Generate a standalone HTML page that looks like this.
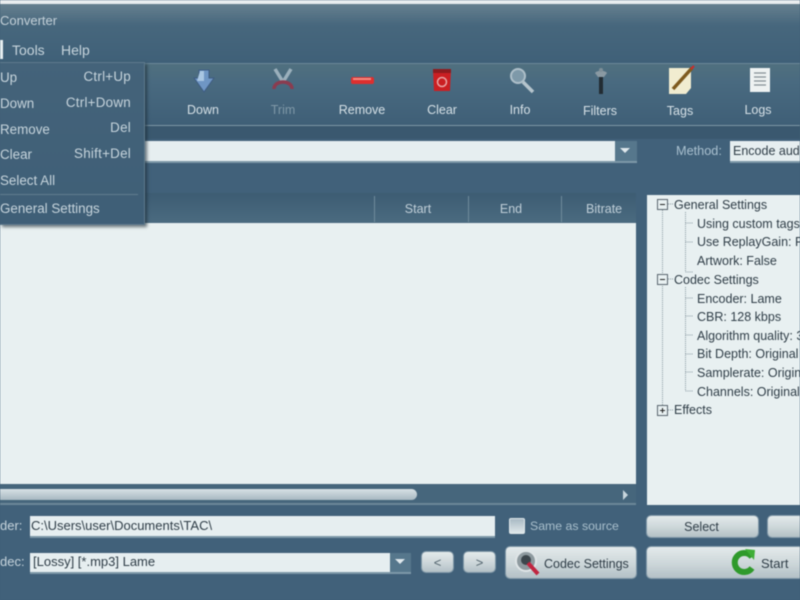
<!DOCTYPE html>
<html><head><meta charset="utf-8"><style>
html,body{margin:0;padding:0;width:800px;height:600px;overflow:hidden;background:#3f5f77}
#r{position:absolute;left:0;top:0;width:800px;height:600px;overflow:hidden;background:#41617a;font-family:"Liberation Sans",sans-serif;font-size:13px;color:#d5e0e6;filter:blur(.6px)}
#r div,#r svg{position:absolute}
.t{white-space:nowrap;line-height:16px;height:16px}
.c{text-align:center}
.d{color:#2f3d47}
.tb{color:#d5e0e6;font-size:12.5px}
.m{color:#c6d4dc;font-size:13.4px}
.k{letter-spacing:.25px}
.in{background:#e6eef0;border-bottom:2px solid #7d98a8}
.btn{background:linear-gradient(#e4eaeb,#ccd6d9 55%,#b3c0c6);border-radius:4px;box-shadow:0 0 0 1px #7f97a6}
.tree{color:#2f3d47;font-size:12.5px}
</style></head><body><div id="r">
<div style="left:0;top:0;width:800px;height:4px;background:#e9edef"></div>
<div style="left:0;top:4px;width:800px;height:60px;background:linear-gradient(#66808f,#47677d 35%,#3f6078)"></div>
<div class="t" style="left:0;top:13px;color:#c3d0d8;font-size:13px">Converter</div>
<div style="left:0;top:40px;width:3px;height:19px;background:#e6eef0"></div>
<div class="t" style="left:12px;top:42px;color:#c6d4dc;font-size:14px">Tools</div>
<div class="t" style="left:61px;top:42px;color:#c6d4dc;font-size:14px">Help</div>

<div style="left:0;top:63px;width:800px;height:61px;background:linear-gradient(#50707f,#496a80 30%,#3f5f77);border-top:1px solid #6b8798;border-bottom:1px solid #7c96a5"></div>
<div style="left:0;top:126px;width:800px;height:13px;background:#3a586f"></div>

<!-- toolbar icons -->
<svg style="left:192px;top:68px" width="24" height="28" viewBox="0 0 24 28"><path d="M7 2h10v8h5L12 24 2 10h5z" fill="#6f96c4" stroke="#3e5c82"/><path d="M8 3h4v10H5z" fill="#a9c6e2"/></svg>
<svg style="left:270px;top:67px" width="26" height="28" viewBox="0 0 26 28"><path d="M5 2l8 13M21 2l-8 13" stroke="#9bb0bc" stroke-width="3.500" fill="none"/><path d="M4 22c0-5 5-7 9-7s9 2 9 7" stroke="#8a3c50" stroke-width="3.500" fill="none"/></svg>
<svg style="left:350px;top:75px" width="26" height="12" viewBox="0 0 26 12"><rect x="1" y="2" width="23" height="7" rx="2" fill="#dd2f2f"/><rect x="3" y="3" width="18" height="2" fill="#f48a80"/></svg>
<svg style="left:431px;top:68px" width="22" height="26" viewBox="0 0 22 26"><path d="M2 2h18l-1 21H3z" fill="#cb1f22"/><rect x="2" y="1" width="18" height="4" fill="#8e1b1e"/><circle cx="11" cy="14" r="4.500" fill="none" stroke="#eaa6a6" stroke-width="1.500"/></svg>
<svg style="left:507px;top:67px" width="28" height="28" viewBox="0 0 28 28"><path d="M16 15l10 10" stroke="#b5c4cc" stroke-width="3.500"/><circle cx="11" cy="9" r="7" fill="#7e99a9" stroke="#aebfc9" stroke-width="2"/></svg>
<svg style="left:592px;top:66px" width="18" height="30" viewBox="0 0 18 30"><rect x="7" y="10" width="4" height="18" fill="#222c33"/><path d="M3 7c2-3 10-3 12 0l-3 4H6z" fill="#8a9aa3"/><circle cx="9" cy="4" r="2" fill="#7e8f98"/></svg>
<svg style="left:668px;top:65px" width="28" height="30" viewBox="0 0 28 30"><path d="M1 3h22v20l-5 6H1z" fill="#f1ecd0"/><path d="M5 24L24 3" stroke="#7e5a1e" stroke-width="3.500"/><path d="M23 4l3-3" stroke="#cc2a2a" stroke-width="2"/></svg>
<svg style="left:749px;top:67px" width="22" height="26" viewBox="0 0 22 26"><rect x="1" y="1" width="20" height="24" fill="#eef2f2"/><path d="M5 6h12M5 10h12M5 14h12M5 18h12" stroke="#828e94" stroke-width="1.300"/></svg>

<div class="t c tb" style="left:173px;top:102px;width:60px">Down</div>
<div class="t c tb" style="left:253px;top:102px;width:60px;color:#7f98a7">Trim</div>
<div class="t c tb" style="left:332px;top:102px;width:60px">Remove</div>
<div class="t c tb" style="left:412px;top:102px;width:60px">Clear</div>
<div class="t c tb" style="left:490px;top:102px;width:60px">Info</div>
<div class="t c tb" style="left:570px;top:103px;width:60px">Filters</div>
<div class="t c tb" style="left:650px;top:103px;width:60px">Tags</div>
<div class="t c tb" style="left:728px;top:102px;width:60px">Logs</div>

<!-- combo row -->
<div class="in" style="left:0;top:141px;width:615px;height:20px"></div>
<div style="left:615px;top:141px;width:22px;height:20px;background:#56778c;border-bottom:2px solid #7d98a8"></div>
<svg style="left:619px;top:147px" width="12" height="7"><path d="M1 1h10L6 6z" fill="#dfe8ec"/></svg>
<div class="t" style="left:676px;top:143px;color:#a9c0cf;font-size:12.700px">Method:</div>
<div class="in" style="left:730px;top:141px;width:70px;height:20px"></div>
<div class="t d" style="left:733px;top:143px;font-size:12.500px">Encode audio</div>

<!-- list -->
<div style="left:0;top:193px;width:636px;height:30px;background:linear-gradient(#3d5c73,#4b6b80)"></div>
<div style="left:374px;top:196px;width:1px;height:26px;background:#6f8b9b"></div>
<div style="left:468px;top:196px;width:1px;height:26px;background:#6f8b9b"></div>
<div style="left:561px;top:196px;width:1px;height:26px;background:#6f8b9b"></div>
<div class="t c" style="left:375px;top:201px;width:86px;color:#c0cfd8;font-size:12.500px">Start</div>
<div class="t c" style="left:469px;top:201px;width:84px;color:#c0cfd8;font-size:12.500px">End</div>
<div class="t" style="left:586px;top:201px;color:#c0cfd8;font-size:12.500px">Bitrate</div>
<div style="left:0;top:223px;width:636px;height:261px;background:#e8f0f1"></div>
<div style="left:0;top:484px;width:636px;height:21px;background:#46667c;border-bottom:2px solid #6b8798;box-sizing:border-box"></div>
<div style="left:0;top:489px;width:417px;height:11px;background:linear-gradient(#d8e1e5,#a7b8c1);border-radius:0 6px 6px 0"></div>
<svg style="left:622px;top:490px" width="7" height="10"><path d="M1 0l5 5-5 5z" fill="#c8d6dd"/></svg>

<!-- tree -->
<div style="left:647px;top:195px;width:153px;height:310px;background:#e8f0f1"></div>
<svg style="left:647px;top:195px" width="60" height="225" fill="none"><g stroke="#8b9aa3" stroke-dasharray="1 1"><path d="M15.500 15V210M38.500 17V77M38.500 77H46M38.500 28H46M38.500 47H46M38.500 92V196M38.500 103H46M38.500 121H46M38.500 140H46M38.500 159H46M38.500 177H46M38.500 196H46M21 9H26M21 84H26M21 215H26"/></g><g fill="#e8f0f1" stroke="#59666e"><rect x="10.500" y="4.500" width="10" height="10"/><rect x="10.500" y="79.500" width="10" height="10"/><rect x="10.500" y="210.500" width="10" height="10"/></g><path d="M13 9.500h5M13 84.500h5M13 215.500h5M15.500 213v5" stroke="#222"/></svg>
<div class="t tree" style="left:674px;top:197px">General Settings</div>
<div class="t tree" style="left:697px;top:216px">Using custom tags:</div>
<div class="t tree" style="left:697px;top:234px">Use ReplayGain: False</div>
<div class="t tree" style="left:697px;top:253px">Artwork: False</div>
<div class="t tree" style="left:674px;top:272px">Codec Settings</div>
<div class="t tree" style="left:697px;top:291px">Encoder: Lame</div>
<div class="t tree" style="left:697px;top:309px">CBR: 128 kbps</div>
<div class="t tree" style="left:697px;top:328px">Algorithm quality: 3</div>
<div class="t tree" style="left:697px;top:346px">Bit Depth: Original</div>
<div class="t tree" style="left:697px;top:365px">Samplerate: Original</div>
<div class="t tree" style="left:697px;top:384px">Channels: Original</div>
<div class="t tree" style="left:674px;top:402px">Effects</div>

<!-- bottom -->
<div class="t" style="left:0;top:518px;color:#c6d4dc;font-size:13px">der:</div>
<div class="in" style="left:30px;top:516px;width:465px;height:20px"></div>
<div class="t d" style="left:31px;top:518px;font-size:13px">C:\Users\user\Documents\TAC\</div>
<div style="left:509px;top:518px;width:14px;height:14px;background:linear-gradient(#a9bac4,#dfe7ea);border:1px solid #dfe7ea;border-radius:2px"></div>
<div class="t" style="left:530px;top:518px;color:#a9bfcc;font-size:12.300px">Same as source</div>
<div class="btn" style="left:647px;top:516px;width:111px;height:21px"></div>
<div class="t c d" style="left:646px;top:519px;width:111px;font-size:12.500px">Select</div>
<div class="btn" style="left:768px;top:516px;width:40px;height:21px"></div>

<div class="t" style="left:0;top:554px;color:#c6d4dc;font-size:13px">dec:</div>
<div class="in" style="left:30px;top:553px;width:360px;height:19px"></div>
<div class="t d" style="left:33px;top:554px;font-size:13px">[Lossy] [*.mp3] Lame</div>
<div style="left:390px;top:553px;width:21px;height:19px;background:#56778c;border-bottom:2px solid #7d98a8"></div>
<svg style="left:394px;top:558px" width="12" height="7"><path d="M1 1h10L6 6z" fill="#dfe8ec"/></svg>
<div class="btn" style="left:422px;top:552px;width:31px;height:20px"></div>
<div class="t c" style="left:422px;top:555px;width:31px;color:#51626d;font-size:13px">&lt;</div>
<div class="btn" style="left:464px;top:552px;width:31px;height:20px"></div>
<div class="t c" style="left:464px;top:555px;width:31px;color:#51626d;font-size:13px">&gt;</div>
<div class="btn" style="left:506px;top:547px;width:130px;height:31px"></div>
<svg style="left:514px;top:548px" width="28" height="29" viewBox="0 0 28 29"><circle cx="12" cy="13" r="10" fill="#8e9a9f" stroke="#dfe5e7" stroke-width="2"/><circle cx="12" cy="12" r="5" fill="#3c464c"/><path d="M14 15l10 11" stroke="#c02540" stroke-width="4"/></svg>
<div class="t d" style="left:544px;top:556px;font-size:12.500px">Codec Settings</div>
<div class="btn" style="left:647px;top:547px;width:160px;height:31px"></div>
<svg style="left:731px;top:548px" width="26" height="28" viewBox="0 0 26 28"><path d="M21 9a9.500 9.500 0 1 0 0 11" fill="none" stroke="#2f9a2b" stroke-width="6"/><path d="M14 1l10 1-1 10z" fill="#3fae37"/></svg>
<div class="t d" style="left:761px;top:556px;font-size:13px">Start</div>

<!-- menu -->
<div style="left:0;top:62px;width:144px;height:161px;background:linear-gradient(#44637a,#3f5f77);border-right:1px solid #5e7a8c;border-top:1px solid #5e7a8c;border-bottom:1px solid #5e7a8c;box-shadow:2px 2px 3px rgba(20,35,45,.6)"></div>
<div class="t m" style="left:0;top:70px">Up</div><div class="t m k" style="right:669px;top:69px">Ctrl+Up</div>
<div class="t m" style="left:0;top:96px">Down</div><div class="t m k" style="right:669px;top:95px">Ctrl+Down</div>
<div class="t m" style="left:0;top:122px">Remove</div><div class="t m k" style="right:669px;top:120px">Del</div>
<div class="t m" style="left:0;top:147px">Clear</div><div class="t m k" style="right:669px;top:146px">Shift+Del</div>
<div class="t m" style="left:0;top:173px">Select All</div>
<div style="left:0;top:194px;width:138px;height:1px;background:#607c8e"></div>
<div class="t m" style="left:0;top:201px">General Settings</div>
</div></body></html>
